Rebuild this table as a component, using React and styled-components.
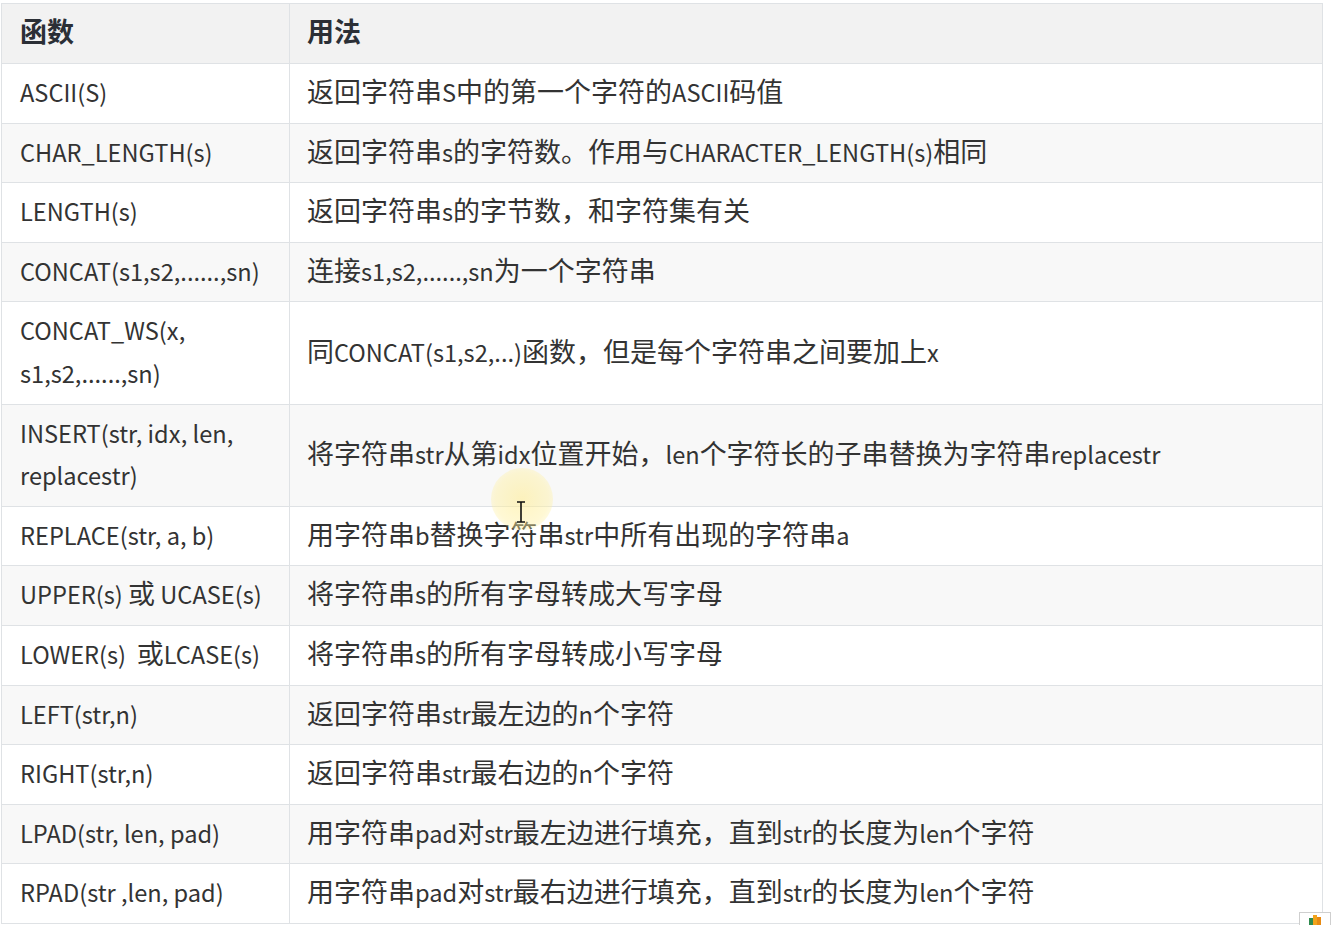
import React from "react";
import styled, { createGlobalStyle } from "styled-components";

const Global = createGlobalStyle`
  html, body { margin: 0; padding: 0; background: #ffffff; }
  body {
    font-family: "Noto Sans CJK SC", "Noto Sans", sans-serif;
    color: #333333;
  }
`;

const Page = styled.div`
  position: relative;
  width: 1331px;
  height: 925px;
  overflow: hidden;
  padding: 3px 0 0 1px;
  box-sizing: border-box;
`;

const Table = styled.table`
  border-collapse: collapse;
  width: 1322px;
  table-layout: fixed;
  font-size: 27px;
  line-height: 42.6px;
  color: #333333;
`;

const HeadCell = styled.th`
  box-sizing: border-box;
  text-align: left;
  font-weight: 700;
  background: #f2f2f2;
  border: 1px solid #dfe2e5;
  padding: 6px 18px 10px 18px;
  height: 60px;
  color: #2b2f36;
  width: ${(p) => p.$w || "auto"};
  padding-left: ${(p) => (p.$first ? "18px" : "17px")};
`;

const Row = styled.tr`
  background: ${(p) => (p.$alt ? "#f8f8f8" : "#ffffff")};
`;

const Cell = styled.td`
  border: 1px solid #dfe2e5;
  padding: 6px 18px 10px ${(p) => (p.$first ? "18px" : "17px")};
  vertical-align: middle;
  white-space: pre;
  font-weight: 400;
`;

const Latin = styled.span`
  font-size: 23.6px;
  line-height: 1;
`;

const Highlight = styled.div`
  position: absolute;
  left: 491px;
  top: 468px;
  width: 62px;
  height: 62px;
  border-radius: 50%;
  background: radial-gradient(circle, rgba(255, 236, 140, 0.55) 0%, rgba(255, 240, 160, 0.45) 60%, rgba(255, 245, 190, 0) 100%);
  pointer-events: none;
`;

const Cursor = styled.svg`
  position: absolute;
  left: 516px;
  top: 501px;
  pointer-events: none;
`;

const Corner = styled.svg`
  position: absolute;
  right: 0;
  bottom: 0;
`;

const cjk = /([\u2E80-\u9FFF\u3000-\u303F\uFF00-\uFFEF]+)/;

function Mixed({ text }) {
  return text
    .split(cjk)
    .filter((s) => s.length > 0)
    .map((s, i) => (cjk.test(s) ? <span key={i}>{s}</span> : <Latin key={i}>{s}</Latin>));
}

const rows = [
  ["ASCII(S)", "返回字符串S中的第一个字符的ASCII码值"],
  ["CHAR_LENGTH(s)", "返回字符串s的字符数。作用与CHARACTER_LENGTH(s)相同"],
  ["LENGTH(s)", "返回字符串s的字节数，和字符集有关"],
  ["CONCAT(s1,s2,......,sn)", "连接s1,s2,......,sn为一个字符串"],
  [["CONCAT_WS(x,", "s1,s2,......,sn)"], "同CONCAT(s1,s2,...)函数，但是每个字符串之间要加上x"],
  [["INSERT(str, idx, len,", "replacestr)"], "将字符串str从第idx位置开始，len个字符长的子串替换为字符串replacestr"],
  ["REPLACE(str, a, b)", "用字符串b替换字符串str中所有出现的字符串a"],
  ["UPPER(s) 或 UCASE(s)", "将字符串s的所有字母转成大写字母"],
  ["LOWER(s)  或LCASE(s)", "将字符串s的所有字母转成小写字母"],
  ["LEFT(str,n)", "返回字符串str最左边的n个字符"],
  ["RIGHT(str,n)", "返回字符串str最右边的n个字符"],
  ["LPAD(str, len, pad)", "用字符串pad对str最左边进行填充，直到str的长度为len个字符"],
  ["RPAD(str ,len, pad)", "用字符串pad对str最右边进行填充，直到str的长度为len个字符"],
];

export default function App() {
  return (
    <>
      <Global />
      <Page>
        <Table>
          <thead>
            <tr>
              <HeadCell $w="288px" $first>函数</HeadCell>
              <HeadCell>用法</HeadCell>
            </tr>
          </thead>
          <tbody>
            {rows.map(([fn, use], i) => (
              <Row key={i} $alt={i % 2 === 1}>
                <Cell $first>
                  {Array.isArray(fn) ? (
                    <>
                      <Mixed text={fn[0]} />
                      <br />
                      <Mixed text={fn[1]} />
                    </>
                  ) : (
                    <Mixed text={fn} />
                  )}
                </Cell>
                <Cell>
                  <Mixed text={use} />
                </Cell>
              </Row>
            ))}
          </tbody>
        </Table>
        <Highlight />
        <Cursor width="10" height="22" viewBox="0 0 10 22">
          <path d="M1 1 H9 M5 1 V21 M1 21 H9" stroke="#111" strokeWidth="1.6" fill="none" />
        </Cursor>
        <Corner width="32" height="13" viewBox="0 0 32 13">
          <rect x="0.5" y="0.5" width="31" height="13" fill="#ffffff" stroke="#cfcfcf" />
          <rect x="10" y="6" width="4" height="7" fill="#2f8a4e" />
          <rect x="14" y="3" width="4" height="10" fill="#f2a31b" />
          <rect x="18" y="5" width="4" height="8" fill="#e88a12" />
        </Corner>
      </Page>
    </>
  );
}
